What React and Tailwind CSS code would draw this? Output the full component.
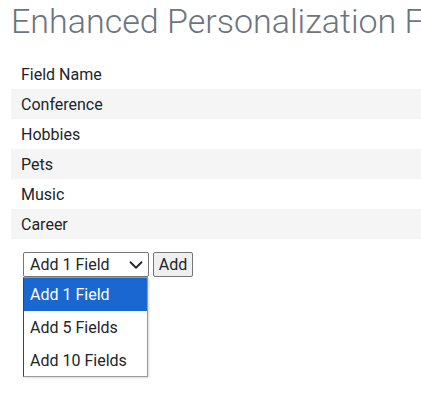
import { ChevronDown } from "lucide-react";

const fields = ["Conference", "Hobbies", "Pets", "Music", "Career"];
const options = ["Add 1 Field", "Add 5 Fields", "Add 10 Fields"];

export default function App() {
  return (
    <div className="w-[421px] h-[396px] overflow-hidden bg-white font-['Roboto',sans-serif] text-[#212529]">
      <div className="w-[640px] px-[11px]">
        <h1 className="text-[34px] leading-[41px] font-light text-[#6c757d] pt-[1px] whitespace-nowrap">
          Enhanced Personalization Fields
        </h1>

        <div className="mt-[17px] text-[16px]">
          <div className="h-[30px] flex items-center pt-[1px] px-[10px]">Field Name</div>
          {fields.map((f, i) => (
            <div
              key={f}
              className={`h-[30px] flex items-center pt-[1px] px-[10px] ${i % 2 === 0 ? "bg-[#f5f5f5]" : "bg-white"}`}
            >
              {f}
            </div>
          ))}
        </div>

        <div className="relative mt-[13px] ml-[12px] flex items-center gap-[4px] text-[16px]">
          <div className="w-[126px] h-[25px] border border-[#767676] rounded-[2px] flex items-center justify-between pl-[6px] pr-[1px] pt-[1px]">
            <span>Add 1 Field</span>
            <ChevronDown size={22} strokeWidth={2} />
          </div>
          <div className="h-[25px] w-[40px] border border-[#767676] rounded-[2px] bg-[#efefef] flex items-center justify-center pt-[1px]">
            Add
          </div>

          <div className="absolute left-0 top-[25px] w-[125px] h-[100px] bg-white border border-[#9a9a9a] border-l-[#444] shadow-[1px_1px_2px_rgba(0,0,0,0.15)]">
            {options.map((o, i) => (
              <div
                key={o}
                className={`h-[33px] flex items-center pl-[6px] ${i === 0 ? "bg-[#1a67d2] text-white" : ""}`}
              >
                {o}
              </div>
            ))}
          </div>
        </div>
      </div>
    </div>
  );
}
